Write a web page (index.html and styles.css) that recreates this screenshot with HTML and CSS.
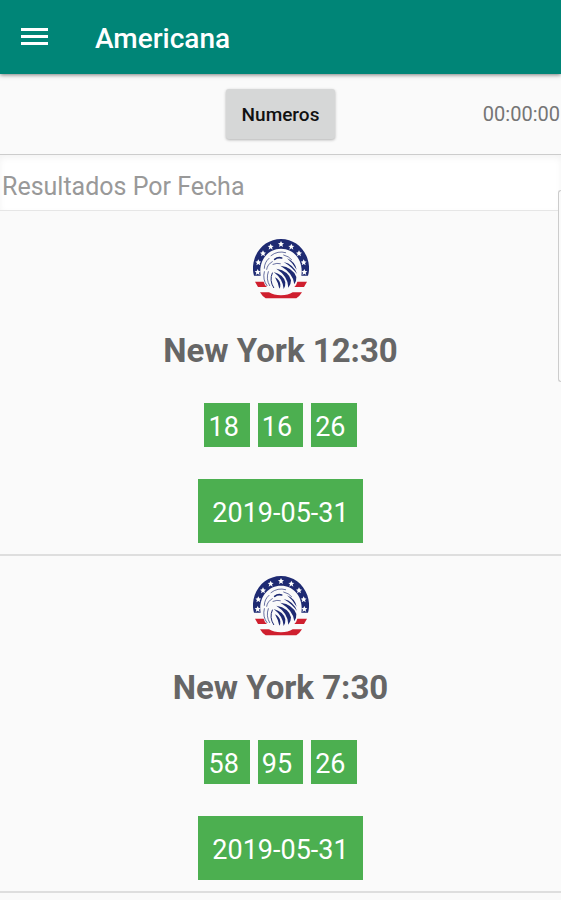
FILE: index.html
```html
<!DOCTYPE html>
<html lang="es">

<head>
    <meta charset="UTF-8">
    <meta name="viewport" content="width=device-width, initial-scale=1.0">
    <title>Americana</title>
    <link rel="stylesheet" href="styles.css">
</head>

<body>
    <!-- Logo compartido por todos los sorteos -->
    <svg class="sprite" aria-hidden="true">
        <symbol id="eagle" viewBox="0 0 168 180">
            <path fill="#1e2a72" d="M3 110 C-2 95 -1 74 5 58 C17 23 48 0 84 0 C120 0 151 23 163 58 C169 74 170 95 165 110 L145 110 C152 68 126 29 84 29 C42 29 16 68 23 110 Z"/>
            <g fill="#fff">
                <path id="star" d="M84 6 l3 6 6 1 -5 4 2 7 -6 -4 -6 4 2 -7 -5 -4 6 -1z"/>
                <use href="#star" x="-31" y="8"/>
                <use href="#star" x="31" y="8"/>
                <use href="#star" x="-54" y="28"/>
                <use href="#star" x="54" y="28"/>
                <use href="#star" x="-68" y="55"/>
                <use href="#star" x="68" y="55"/>
                <use href="#star" x="-70" y="84"/>
                <use href="#star" x="70" y="84"/>
            </g>
            <g fill="#cf1f2e">
                <path d="M6 128 H32 Q34 137 42 144 H15 Z"/>
                <path d="M162 128 H133 Q131 137 124 144 H153 Z"/>
                <path d="M21 160 H48 Q62 169 84 169 Q106 169 119 160 H147 Q140 172 130 178 H38 Q27 171 21 160 Z"/>
            </g>
            <!-- Cabeza: ceja, ojo y pico -->
            <g fill="none" stroke="#1e2a72" stroke-linecap="round">
                <path stroke-width="2" d="M54 50 Q74 34 98 41"/>
                <path stroke-width="5" d="M65 61 Q74 54 86 57"/>
                <path stroke-width="2" d="M92 48 Q108 52 116 62"/>
                <path stroke-width="2" d="M48 58 Q34 70 34 88"/>
                <path stroke-width="2" d="M58 68 Q43 76 41 91"/>
                <path stroke-width="2" d="M60 76 Q72 71 82 74"/>
                <path stroke-width="2" d="M34 98 Q28 122 42 140"/>
                <path stroke-width="2" d="M46 98 Q38 120 50 140"/>
                <path stroke-width="3" d="M58 102 Q48 124 62 146"/>
            </g>
            <!-- Plumas -->
            <g fill="#1e2a72">
                <path d="M102 58 Q126 68 131 92 Q120 72 102 58 Z"/>
                <path d="M92 69 Q122 76 132 105 Q117 84 92 69 Z"/>
                <path d="M82 80 Q120 85 130 114 Q131 126 124 136 Q122 104 82 80 Z"/>
                <path d="M70 89 Q108 96 114 124 Q114 138 106 146 Q106 112 70 89 Z"/>
                <path d="M62 99 Q92 107 97 130 Q98 142 92 150 Q90 120 62 99 Z"/>
                <path d="M66 115 Q80 122 82 136 Q83 144 79 149 Q75 130 66 115 Z"/>
            </g>
        </symbol>
    </svg>

    <header class="app-bar">
        <button type="button" class="menu-button" aria-label="Menú">
            <svg width="28" height="20" viewBox="0 0 28 20" aria-hidden="true">
                <path fill="#fff" d="M1 1h27v3H1zM1 8h27v3H1zM1 15h27v3H1z"/>
            </svg>
        </button>
        <h1 class="app-title">Americana</h1>
    </header>

    <div class="toolbar">
        <button type="button" class="numbers-button">Numeros</button>
        <span class="timer">00:00:00</span>
    </div>

    <main>
        <h2 class="section-title">Resultados Por Fecha</h2>

        <div class="results">
            <section class="result">
                <svg class="result-logo" aria-hidden="true"><use href="#eagle"/></svg>
                <h3 class="result-title">New York 12:30</h3>
                <ul class="numbers">
                    <li>18</li>
                    <li>16</li>
                    <li>26</li>
                </ul>
                <time class="result-date" datetime="2019-05-31">2019-05-31</time>
            </section>

            <section class="result">
                <svg class="result-logo" aria-hidden="true"><use href="#eagle"/></svg>
                <h3 class="result-title">New York 7:30</h3>
                <ul class="numbers">
                    <li>58</li>
                    <li>95</li>
                    <li>26</li>
                </ul>
                <time class="result-date" datetime="2019-05-31">2019-05-31</time>
            </section>
        </div>
    </main>

    <div class="edge-handle"></div>
</body>

</html>
```

FILE: styles.css
```css
* {
    box-sizing: border-box;
}

body {
    font-family: Roboto, "Liberation Sans", sans-serif;
    background-color: #fafafa;
    margin: 0;
    color: #666;
}

.sprite {
    position: absolute;
    width: 0;
    height: 0;
}

.app-bar {
    position: relative;
    display: flex;
    align-items: center;
    gap: 47px;
    height: 74px;
    padding: 0 20px;
    background-color: #008577;
    box-shadow: 0 1px 4px rgba(0, 0, 0, 0.5);
}

.menu-button {
    display: flex;
    padding: 0;
    border: none;
    background: none;
    cursor: pointer;
}

.app-title {
    margin: 0;
    padding-top: 2px;
    font-size: 28px;
    font-weight: 500;
    color: #fff;
}

.toolbar {
    display: grid;
    grid-template-columns: 1fr auto 1fr;
    align-items: center;
    height: 81px;
    padding: 0 1px;
    border-bottom: 1px solid #ccc;
}

.numbers-button {
    grid-column: 2;
    height: 50px;
    padding: 0 16px;
    border: none;
    border-radius: 3px;
    background-color: #d6d7d7;
    box-shadow: 0 1px 3px rgba(0, 0, 0, 0.3);
    font-family: inherit;
    font-size: 19px;
    font-weight: 500;
    color: #111;
    cursor: pointer;
}

.timer {
    justify-self: end;
    font-size: 20px;
    color: #757575;
}

.section-title {
    margin: 0;
    height: 56px;
    padding: 8px 2px 0;
    border-bottom: 1px solid #e6e6e6;
    background-color: #fff;
    box-shadow: inset 0 3px 6px rgba(0, 0, 0, 0.05);
    font-size: 25px;
    font-weight: 400;
    line-height: 48px;
    color: #999;
}

.results {
    padding-top: 8px;
}

.result {
    display: flex;
    flex-direction: column;
    align-items: center;
    gap: 32px;
    padding: 20px 0 11px;
    border-bottom: 2px solid #dedede;
}

.result-logo {
    width: 56px;
    height: 60px;
}

.result-title {
    margin: 0;
    font-size: 33px;
    font-weight: 700;
    line-height: 40px;
}

.numbers {
    display: flex;
    gap: 8px;
    margin: 0;
    padding: 0;
    list-style: none;
}

.numbers li,
.result-date {
    background-color: #4caf50;
    font-size: 27px;
    color: #fff;
}

.numbers li {
    padding: 4px 11px 0 4px;
    line-height: 40px;
}

.result-date {
    padding: 4px 14px 0;
    line-height: 60px;
}

.edge-handle {
    position: absolute;
    top: 190px;
    right: 0;
    width: 3px;
    height: 192px;
    border: 1px solid #ccc;
    border-right: none;
    border-radius: 3px 0 0 3px;
    background-color: #fafafa;
}
```
